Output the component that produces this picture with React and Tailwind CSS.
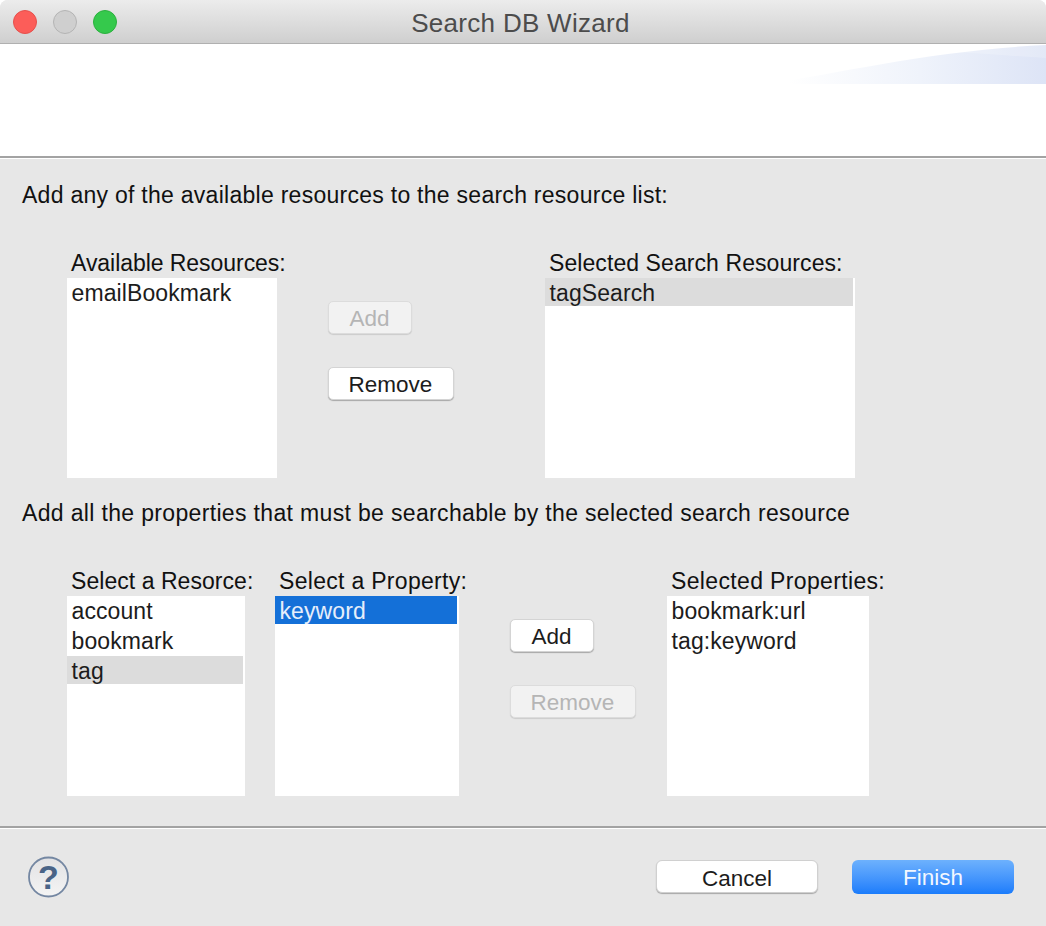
import React from 'react';

const font = { fontFamily: '"Liberation Sans", Arial, sans-serif' };

const ListBox = ({ items, width, selected, active }) => (
  <div className={`${width} h-[200px] bg-white flex flex-col gap-[2px]`}>
    {items.map((item) => {
      let rowClass = 'text-[#1c1c1c]';
      if (item === selected) rowClass = 'bg-[#dcdcdc] text-[#1c1c1c]';
      if (item === active) rowClass = 'bg-[#1470d8] text-[#e6eefb]';
      return (
        <div key={item} className={`h-[28px] mr-[2px] pl-[4.5px] pt-[1px] text-[23px] leading-[28px] tracking-[0.1px] ${rowClass}`}>
          {item}
        </div>
      );
    })}
  </div>
);

// label is allowed to run past the list below it, like in the original dialog
const Column = ({ label, children, labelClass = 'tracking-[0.05px]' }) => (
  <div className="flex flex-col">
    <div className="w-0 h-[28px] pl-[4px] text-[23px] leading-[26px] text-[#111] whitespace-nowrap">
      <span className={labelClass}>{label}</span>
    </div>
    {children}
  </div>
);

const SmallButton = ({ label, width, disabled }) => (
  <button
    className={`${width} h-[33px] pt-[2px] pr-[1px] rounded-[5px] text-[22.5px] leading-[30px] border-[1px] ${
      disabled
        ? 'bg-[#f2f2f2] text-[#b5b5b5] border-[#dcdcdc] shadow-[0_1px_1px_rgba(0,0,0,0.12)]'
        : 'bg-white text-[#1c1c1c] border-[#d4d4d4] shadow-[0_1px_1px_rgba(0,0,0,0.28)]'
    }`}
  >
    {label}
  </button>
);

const Separator = () => (
  <div className="h-[3px] border-t-2 border-[#a3a3a3] bg-white" />
);

const HelpIcon = () => (
  <svg width="42" height="42" viewBox="0 0 42 42">
    <defs>
      <linearGradient id="helpFill" x1="0" y1="0" x2="0" y2="1">
        <stop offset="0" stopColor="#e2e2e4" />
        <stop offset="1" stopColor="#f4f4f4" />
      </linearGradient>
    </defs>
    <circle cx="20.5" cy="21" r="19.5" fill="url(#helpFill)" stroke="#7487a2" strokeWidth="1.8" />
    <text x="20.5" y="32.5" textAnchor="middle" fontSize="34" fontWeight="700" fill="#4a6487" fontFamily="Liberation Sans, Arial, sans-serif">?</text>
  </svg>
);

export default function App() {
  return (
    <div className="w-[1046px] h-[926px] bg-white overflow-hidden" style={font}>
      <div className="w-full h-full rounded-t-[8px] overflow-hidden bg-[#e7e7e7] flex flex-col">
        {/* title bar */}
        <div className="relative h-[44px] shrink-0 flex items-center justify-center bg-gradient-to-b from-[#ececec] to-[#cfcfcf] border-b-[1px] border-[#b0b0b0]">
          <div className="absolute left-[13px] top-[10px] flex gap-[16px]">
            <div className="w-[24px] h-[24px] rounded-full bg-[#fc5d59] border-[1px] border-[#e5504c]" />
            <div className="w-[24px] h-[24px] rounded-full bg-[#cfcfcf] border-[1px] border-[#b4b4b4]" />
            <div className="w-[24px] h-[24px] rounded-full bg-[#35c94c] border-[1px] border-[#2bb03e]" />
          </div>
          <span className="text-[26px] leading-[28px] text-[#4c4c4c] ml-[-5px] mt-[2px] tracking-[0.3px]">Search DB Wizard</span>
        </div>

        {/* banner area */}
        <div className="relative h-[112px] shrink-0 bg-white">
          <svg className="absolute right-0 top-0" width="300" height="40" viewBox="0 0 300 40">
            <defs>
              <linearGradient id="wedge" x1="0" y1="0" x2="1" y2="0">
                <stop offset="0.08" stopColor="#ffffff" />
                <stop offset="0.55" stopColor="#eff3fb" />
                <stop offset="1" stopColor="#dde4f6" />
              </linearGradient>
            </defs>
            <path d="M20 40 C100 28 190 6 300 1 L300 40 Z" fill="url(#wedge)" />
            <path d="M210 8 C245 3 275 1 300 1 L300 14 C270 12 240 10 210 8 Z" fill="#ffffff" opacity="0.2" />
          </svg>
        </div>
        <Separator />

        {/* body */}
        <div className="h-[667px] shrink-0 flex flex-col">
          <div className="pl-[22px] pt-[22px] text-[23px] leading-[28px] tracking-[0.27px] text-[#111]">
            Add any of the available resources to the search resource list:
          </div>
          <div className="flex pl-[67px] mt-[41px]">
            <Column label="Available Resources:" labelClass="tracking-[-0.05px]">
              <ListBox width="w-[210px]" items={['emailBookmark']} />
            </Column>
            <div className="w-[126px] ml-[51px] pt-[51px] flex flex-col items-start gap-[33px]">
              <SmallButton label="Add" width="w-[84px]" disabled />
              <SmallButton label="Remove" width="w-[126px]" />
            </div>
            <div className="ml-[91px]">
              <Column label="Selected Search Resources:" labelClass="tracking-[0.08px]">
                <ListBox width="w-[310px]" items={['tagSearch']} selected="tagSearch" />
              </Column>
            </div>
          </div>

          <div className="pl-[22px] mt-[21px] text-[23px] leading-[28px] tracking-[0.34px] text-[#111]">
            Add all the properties that must be searchable by the selected search resource
          </div>
          <div className="flex pl-[67px] mt-[41px]">
            <Column label="Select a Resorce:">
              <ListBox width="w-[178px]" items={['account', 'bookmark', 'tag']} selected="tag" />
            </Column>
            <div className="ml-[30px]">
              <Column label="Select a Property:" labelClass="tracking-[0.3px]">
                <ListBox width="w-[184px]" items={['keyword']} active="keyword" />
              </Column>
            </div>
            <div className="w-[126px] ml-[51px] pt-[51px] flex flex-col items-start gap-[33px]">
              <SmallButton label="Add" width="w-[84px]" />
              <SmallButton label="Remove" width="w-[126px]" disabled />
            </div>
            <div className="ml-[31px]">
              <Column label="Selected Properties:" labelClass="tracking-[0.35px]">
                <ListBox width="w-[202px]" items={['bookmark:url', 'tag:keyword']} />
              </Column>
            </div>
          </div>
        </div>
        <Separator />

        {/* footer */}
        <div className="flex-1 flex items-center pl-[28px] pr-[32px] pb-[2px]">
          <HelpIcon />
          <div className="ml-auto flex items-center gap-[34px]">
            <button className="w-[162px] h-[33px] pt-[1px] rounded-[6px] bg-white border-[1px] border-[#d0d0d0] shadow-[0_1px_1px_rgba(0,0,0,0.28)] text-[22.5px] text-[#1c1c1c]">
              Cancel
            </button>
            <button className="w-[162px] h-[34px] pt-[1px] rounded-[6px] bg-gradient-to-b from-[#6db1fd] to-[#1a7cfb] text-[22.5px] text-[#f2f7ff]">
              Finish
            </button>
          </div>
        </div>
      </div>
    </div>
  );
}
